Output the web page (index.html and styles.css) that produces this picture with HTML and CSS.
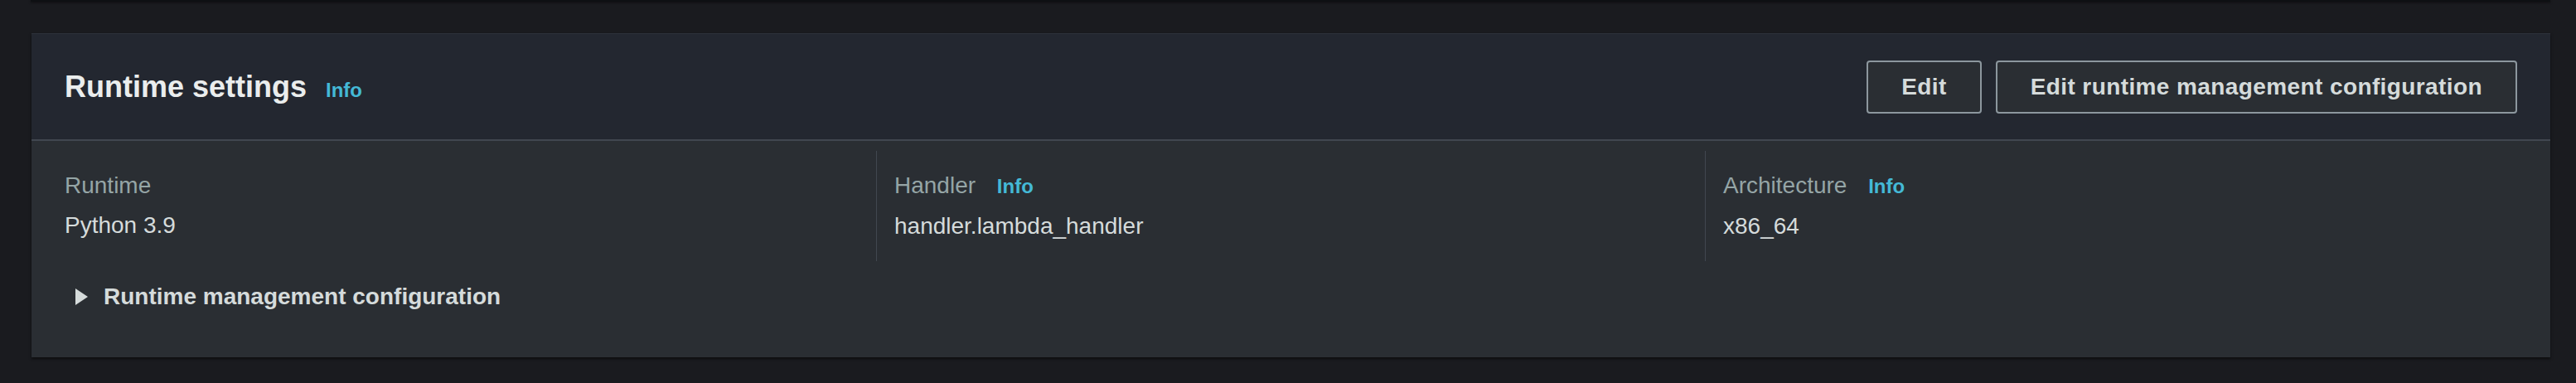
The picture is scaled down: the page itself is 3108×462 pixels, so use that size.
FILE: index.html
```html
<!DOCTYPE html>
<html lang="en">
<head>
<meta charset="utf-8">
<title>Runtime settings</title>
<link rel="stylesheet" href="styles.css">
</head>
<body>
<div class="prev-card"></div>
<div class="page">
  <section class="card">
    <header class="card-header">
      <div class="title">
        <h2>Runtime settings</h2>
        <a class="info" href="#">Info</a>
      </div>
      <div class="actions">
        <button class="btn">Edit</button>
        <button class="btn">Edit runtime management configuration</button>
      </div>
    </header>
    <div class="card-body">
      <div class="columns">
        <div class="col">
          <div class="label">Runtime</div>
          <div class="value">Python 3.9</div>
        </div>
        <div class="col">
          <div class="label">Handler <a class="info small" href="#">Info</a></div>
          <div class="value">handler.lambda_handler</div>
        </div>
        <div class="col">
          <div class="label">Architecture <a class="info small" href="#">Info</a></div>
          <div class="value">x86_64</div>
        </div>
      </div>
      <div class="expand">
        <svg class="caret" width="15" height="20" viewBox="0 0 15 20"><polygon points="0,0 15,10 0,20" fill="#d5dbdb"/></svg>
        <span>Runtime management configuration</span>
      </div>
    </div>
  </section>
</div>
</body>
</html>
```
FILE: styles.css
```css
* { box-sizing: border-box; }
html, body { margin: 0; padding: 0; }
body {
  background: #1a1b1f;
  font-family: "Liberation Sans", Arial, sans-serif;
  width: 3108px;
  height: 462px;
  overflow: hidden;
}
.prev-card {
  margin: 0 31px 0 37px;
  height: 2px;
  background: #0e1013;
  box-shadow: 0 1px 3px rgba(0,0,0,0.6);
}
.page {
  padding: 38px 31px 0 38px;
}
.card {
  background: #2a2e33;
  box-shadow: 0 2px 3px rgba(0,0,0,0.55);
}
.card-header {
  height: 130px;
  background: #232730;
  border-top: 1px solid #2c3039;
  border-bottom: 2px solid #414750;
  display: flex;
  align-items: center;
  justify-content: space-between;
  padding: 0 40px;
}
.title {
  display: flex;
  align-items: baseline;
  margin-top: 1px;
}
.title h2 {
  margin: 0;
  font-size: 36px;
  font-weight: 700;
  color: #eaeded;
  line-height: 44px;
}
.info {
  color: #44b9d6;
  font-weight: 700;
  font-size: 24px;
  text-decoration: none;
  margin-left: 23px;
}
.info.small { margin-left: 18px; }
.actions {
  display: flex;
  gap: 17px;
}
.btn {
  height: 64px;
  padding: 0 40px;
  background: #2a2e33;
  border: 2px solid #8c979e;
  border-radius: 4px;
  color: #d5dbdb;
  font-family: inherit;
  font-size: 28px;
  font-weight: 700;
  letter-spacing: 0.4px;
}
.card-body {
  padding: 12px 40px 53px 40px;
}
.columns {
  display: grid;
  grid-template-columns: repeat(3, 1fr);
  margin: 0 -20px 0 -21px;
}
.col {
  padding: 22px 20px 22px 21px;
}
.col + .col {
  border-left: 1px solid #414750;
}
.label {
  font-size: 28px;
  line-height: 40px;
  color: #95a5a6;
}
.value {
  margin-top: 8px;
  font-size: 28px;
  line-height: 40px;
  color: #d5dbdb;
}
.expand {
  margin-top: 23px;
  padding-left: 13px;
  display: flex;
  align-items: center;
  gap: 19px;
  font-size: 28px;
  line-height: 40px;
  font-weight: 700;
  color: #d5dbdb;
}
.caret { display: block; }
```
